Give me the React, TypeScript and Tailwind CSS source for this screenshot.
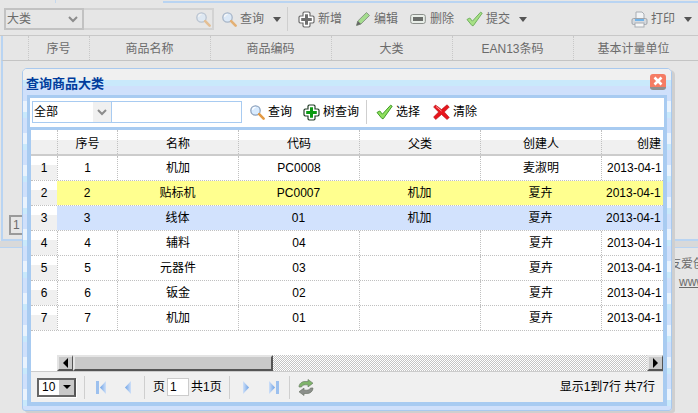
import type { ReactNode } from "react";

function SearchIcon() {
  return (
    <svg width="16" height="16" viewBox="0 0 16 16" className="shrink-0">
      <circle cx="6.5" cy="6.5" r="4.7" fill="#d8ebff" stroke="#8fa3bd" strokeWidth="1.3" />
      <path d="M3.6 6a3 3 0 0 1 3-2.6" fill="none" stroke="#fff" strokeWidth="1.2" />
      <path d="M10.2 10.2 14.6 14.6" stroke="#e39a45" strokeWidth="2.6" strokeLinecap="round" />
    </svg>
  );
}

function PlusIcon({ fill = "#0b9a12", line = "#26402a" }: { fill?: string; line?: string }) {
  return (
    <svg width="17" height="17" viewBox="0 0 17 17" className="shrink-0">
      <path d="M6 1h5l1 1v3h3l1 1v5l-1 1h-3v3l-1 1H6l-1-1v-3H2l-1-1V6l1-1h3V2z" fill="#fff" stroke={line} strokeWidth="1.2" />
      <path d="M7 3.2h3V7h3.8v3H10v3.8H7V10H3.2V7H7z" fill={fill} />
    </svg>
  );
}

function CheckIcon() {
  return (
    <svg width="17" height="16" viewBox="0 0 17 16" className="shrink-0">
      <path d="M1 8.5 3.8 7l2.6 3.2L14.6 1.2l1.6 1-8.8 12.4H6z" fill="#8fe05e" stroke="#3f9a26" strokeWidth="1" />
    </svg>
  );
}

function CrossIcon() {
  return (
    <svg width="17" height="16" viewBox="0 0 17 16" className="shrink-0">
      <path d="M2.5 1 8.5 5.500 14 .8 16.300 3l-5 5 5 5.500-2.300 2-5.500-5-5.800 5L.6 13l5-5-5-5z" fill="#e8141c" stroke="#b01015" strokeWidth=".6" />
      <path d="M3 2.500 8.500 7" stroke="#ff9a9a" strokeWidth="1" />
    </svg>
  );
}

function PencilIcon() {
  return (
    <svg width="16" height="16" viewBox="0 0 16 16" className="shrink-0">
      <path d="M1.500 14.500 2.800 10 11.500 1.500l3 3L6 13z" fill="#a4dc8e" stroke="#8a9a88" strokeWidth="1" />
      <path d="M1.500 14.500 2.800 10 6 13z" fill="#666" />
    </svg>
  );
}

function DeleteIcon() {
  return (
    <svg width="16" height="16" viewBox="0 0 16 16" className="shrink-0">
      <rect x=".7" y="3.500" width="14.600" height="9" rx="2" fill="#e8eee8" stroke="#8b8f8b" />
      <rect x="3" y="6" width="10" height="4" fill="#6a6d6a" />
    </svg>
  );
}

function PrintIcon() {
  return (
    <svg width="17" height="17" viewBox="0 0 17 17" className="shrink-0">
      <path d="M5 1h6l2 2v5H5z" fill="#f2f4f6" stroke="#a9aeb4" />
      <rect x="1" y="7.500" width="15" height="6" rx="1.500" fill="#d5d9de" stroke="#a0a5ab" />
      <rect x="4" y="8" width="9" height="2" fill="#71b4ea" />
      <rect x="4" y="12" width="9" height="4" fill="#f6f6f6" stroke="#a9aeb4" />
    </svg>
  );
}

function CaretDown() {
  return <span className="w-0 h-0 border-x-[4px] border-x-transparent border-t-[5px] border-t-[#555]" />;
}

function ChevronDown({ color = "#8c8c8c" }: { color?: string }) {
  return (
    <svg width="10" height="7" viewBox="0 0 10 7">
      <path d="M1 1 5 5 9 1" fill="none" stroke={color} strokeWidth="2" />
    </svg>
  );
}

function NavIcon({ dir, bar = false }: { dir: "left" | "right"; bar?: boolean }) {
  return (
    <svg width="11" height="15" viewBox="0 0 11 15" className="shrink-0">
      <defs>
        <linearGradient id={`nav-${dir}`} x1="0" x2="1" y1="0" y2="0">
          <stop offset="0" stopColor={dir === "left" ? "#6ea2e6" : "#cfe0f8"} />
          <stop offset="1" stopColor={dir === "left" ? "#cfe0f8" : "#6ea2e6"} />
        </linearGradient>
      </defs>
      {dir === "left" ? (
        <>
          {bar && <rect x="0" y="1" width="3" height="13" fill="#9cc0ee" />}
          <path d="M10 1v13L4 7.500z" fill={`url(#nav-${dir})`} />
        </>
      ) : (
        <>
          {bar && <rect x="8" y="1" width="3" height="13" fill="#9cc0ee" />}
          <path d="M1 1v13l6-6.500z" fill={`url(#nav-${dir})`} />
        </>
      )}
    </svg>
  );
}

function RefreshIcon() {
  return (
    <svg width="18" height="17" viewBox="1.500 0 15 17" className="shrink-0">
      <path d="M2 8c0-3.500 3-5.500 6-5.500h3V.5l5 3.700-5 3.700V5.800H8.500C6.500 5.800 5 6.500 4.500 8z" fill="#7fb56a" stroke="#6d7f68" strokeWidth=".7" />
      <path d="M16 9c0 3.500-3 5.500-6 5.500H7v2l-5-3.700 5-3.700v2.100h2.500c2 0 3.500-.7 4-2.200z" fill="#8b8f8b" stroke="#6d7569" strokeWidth=".7" />
    </svg>
  );
}

function ToolButton({ icon, label, className = "" }: { icon: ReactNode; label: string; className?: string }) {
  return (
    <div className={`flex items-center gap-[3px] shrink-0 ${className}`}>
      {icon}
      <span className="whitespace-nowrap">{label}</span>
    </div>
  );
}

const pageHeaders = [
  { label: "序号", w: "w-[61px]" },
  { label: "商品名称", w: "w-[121px]" },
  { label: "商品编码", w: "w-[121px]" },
  { label: "大类", w: "w-[121px]" },
  { label: "EAN13条码", w: "w-[121px]" },
  { label: "基本计量单位", w: "w-[121px]" },
];

const rows = [
  { id: 1, name: "机加", code: "PC0008", parent: "", user: "麦淑明", bg: "" },
  { id: 2, name: "贴标机", code: "PC0007", parent: "机加", user: "夏卉", bg: "bg-[#ffff8f]" },
  { id: 3, name: "线体", code: "01", parent: "机加", user: "夏卉", bg: "bg-[#d2e2fd]" },
  { id: 4, name: "辅料", code: "04", parent: "", user: "夏卉", bg: "" },
  { id: 5, name: "元器件", code: "03", parent: "", user: "夏卉", bg: "" },
  { id: 6, name: "钣金", code: "02", parent: "", user: "夏卉", bg: "" },
  { id: 7, name: "机加", code: "01", parent: "", user: "夏卉", bg: "" },
];

function PageBehind() {
  return (
    <div className="flex flex-col h-full text-[#6b6b6b]">
      {/* top tab edge */}
      <div className="h-[3px] flex shrink-0">
        <div className="w-[56px] border-r border-[#c4d8ee]" />
        <div className="w-[107px]" />
        <div className="flex-1 border-b-2 border-[#b9d4f2]" />
      </div>

      {/* toolbar */}
      <div className="h-[33px] shrink-0 flex items-center pl-[4px] border-b border-[#c8c8c8]">
        <div className="w-[80px] h-[22px] border-2 border-[#c2c2c2] flex items-center justify-between pl-[1px] pr-[4px]">
          <span>大类</span>
          <ChevronDown />
        </div>
        <div className="w-[130px] h-[22px] border-2 border-l-0 border-[#c2c2c2] flex items-center justify-end pr-[1px] opacity-50">
          <SearchIcon />
        </div>
        <div className="opacity-70 ml-[7px]"><SearchIcon /></div>
        <span className="ml-[3px]">查询</span>
        <div className="ml-[9px] flex"><CaretDown /></div>
        <div className="ml-[6px] w-px h-[24px] bg-[#cfcfcf]" />
        <div className="ml-[10px]"><PlusIcon fill="#6f6f6f" line="#6f6f6f" /></div>
        <span className="ml-[3px]">新增</span>
        <div className="ml-[13px]"><PencilIcon /></div>
        <span className="ml-[3px]">编辑</span>
        <div className="ml-[12px]"><DeleteIcon /></div>
        <span className="ml-[4px]">删除</span>
        <div className="ml-[12px] opacity-70"><CheckIcon /></div>
        <span className="ml-[3px]">提交</span>
        <div className="ml-[9px] flex"><CaretDown /></div>
        <div className="ml-[104px]"><PrintIcon /></div>
        <span className="ml-[3px]">打印</span>
        <div className="ml-[9px] flex"><CaretDown /></div>
      </div>

      {/* behind grid header */}
      <div className="h-[25px] shrink-0 flex border-l-2 border-[#b9d4f2] border-b border-b-[#c4c4c4] ml-[1px] pl-[25px]">
        {pageHeaders.map((h) => (
          <div key={h.label} className={`${h.w} shrink-0 flex items-center justify-center pr-[1px] pt-[1px] border-l border-dotted border-[#c8c8c8] whitespace-nowrap`}>
            {h.label}
          </div>
        ))}
      </div>

      {/* rest of the grid with its pager */}
      <div className="h-[180px] shrink-0 ml-[1px] border-l-2 border-b-2 border-[#b9d4f2] flex items-end pl-[6px] pb-[4px]">
        <div className="w-[13px] h-[20px] border-2 border-[#9a9a9a] border-r-0 flex items-center pl-[2px]">1</div>
      </div>
      <div className="h-[6px] shrink-0 bg-[#d9d9d9]" />
      <div className="h-px shrink-0 bg-[#b9d4f2]" />
      <div className="pl-[669px] pt-[9px] whitespace-nowrap leading-[14px]">友爱创</div>
      <div className="pl-[679px] pt-[5px] whitespace-nowrap leading-[13px] underline">www</div>
    </div>
  );
}

function Dialog() {
  return (
    <div className="absolute left-[22px] top-[68px] w-[650px] h-[343px] rounded-t-[5px] rounded-b-[3px] border border-[#a9c9ee] shadow-[3px_2px_0_#cfcfcf] bg-[repeating-linear-gradient(180deg,#eaf3fd_0,#eaf3fd_11px,#c9e9fb_11px,#c9e9fb_17px,#cfe0fb_17px,#cfe0fb_32px)] text-black overflow-hidden">
      {/* title */}
      <div className="h-[26px] flex items-center justify-between pl-[3px] pr-[5px] bg-[linear-gradient(180deg,#f0f0f0_0,#f0f0f0_11px,#c9e9fb_11px,#c9e9fb_17px,#cfe0fb_17px)]">
        <span className="text-[13px] font-bold text-[#003c9c] pt-[4px]">查询商品大类</span>
        <span className="w-[16px] h-[16px] rounded-[3px] bg-[#f57c63] border-b-[3px] border-[#8f8f8f] flex items-center justify-center">
          <svg width="10" height="10" viewBox="0 0 10 10">
            <path d="M1.500 1.500 8.500 8.500M8.500 1.500 1.500 8.500" stroke="#fff" strokeWidth="2.600" />
          </svg>
        </span>
      </div>

      <div className="px-[4px]">
        {/* toolbar */}
        <div className="h-[35px] border-[3px] border-[#a8cbf1] bg-white flex items-center pl-[2px] pb-[1px]">
          <div className="w-[80px] h-[22px] border border-[#a8cbf1] flex items-center justify-between pl-[1px]">
            <span>全部</span>
            <span className="w-[18px] h-full bg-[#f0f0f0] flex items-center justify-center">
              <ChevronDown />
            </span>
          </div>
          <div className="w-[130px] h-[22px] border border-l-0 border-[#a8cbf1]" />
          <ToolButton className="ml-[7px]" icon={<SearchIcon />} label="查询" />
          <ToolButton className="ml-[11px]" icon={<PlusIcon />} label="树查询" />
          <div className="ml-[7px] w-px h-[24px] bg-[#cfcfcf]" />
          <ToolButton className="ml-[9px]" icon={<CheckIcon />} label="选择" />
          <ToolButton className="ml-[13px]" icon={<CrossIcon />} label="清除" />
        </div>

        <div className="border-x-[4px] border-b-[4px] border-[#a8cbf1] bg-white">
          {/* header row */}
          <div className="h-[26px] flex border-b-2 border-[#cccccc] bg-[linear-gradient(180deg,#fff_0,#fff_10px,#f0f0f0_10px)]">
            <div className="w-[26px] shrink-0" />
            <HeadCell w="w-[60px]">序号</HeadCell>
            <HeadCell w="w-[121px]">名称</HeadCell>
            <HeadCell w="w-[121px]">代码</HeadCell>
            <HeadCell w="w-[121px]">父类</HeadCell>
            <HeadCell w="w-[121px]">创建人</HeadCell>
            <div className="flex-1 border-l border-dotted border-[#c0c0c0] flex items-center pl-[35px] pt-[4px] whitespace-nowrap">创建</div>
          </div>

          {/* rows */}
          {rows.map((r) => (
            <div key={r.id} className="h-[25px] flex border-b border-dotted border-[#c0c0c0]">
              <div className="w-[26px] shrink-0 flex items-center justify-center bg-[linear-gradient(180deg,#fff_0,#fff_9px,#f0f0f0_9px)]">
                {r.id}
              </div>
              <div className={`flex flex-1 min-w-0 ${r.bg}`}>
                <Cell w="w-[60px]" plain={!!r.bg}>{r.id}</Cell>
                <Cell w="w-[121px]" plain={!!r.bg}>{r.name}</Cell>
                <Cell w="w-[121px]" plain={!!r.bg}>{r.code}</Cell>
                <Cell w="w-[121px]" plain={!!r.bg}>{r.parent}</Cell>
                <Cell w="w-[121px]" plain={!!r.bg}>{r.user}</Cell>
                <div className={`flex-1 flex items-center pl-[5px] whitespace-nowrap ${r.bg ? "" : "border-l border-dotted border-[#c0c0c0]"}`}>
                  2013-04-1
                </div>
              </div>
            </div>
          ))}

          {/* horizontal scroll bar */}
          <div className="h-[24px]" />
          <div className="h-[16px] ml-[26px] flex bg-[repeating-conic-gradient(#c4c4c4_0_25%,#ffffff_0_50%)] bg-[length:2px_2px]">
            <ScrollButton dir="left" />
            <div className="w-[200px] bg-[#c9c9c9] border-t-2 border-l-2 border-t-[#e4e4e4] border-l-[#e4e4e4] border-r-2 border-r-[#555] border-b-2 border-b-[#555]" />
            <div className="flex-1" />
            <ScrollButton dir="right" />
          </div>

          {/* pager */}
          <div className="h-[31px] bg-[#f0f0f0] border-t border-[#cccccc] flex items-center pl-[6px] pr-[8px]">
            <div className="w-[39px] h-[19px] border-2 border-[#666] border-r-[#555] flex bg-white shadow-[1px_1px_0_#fff]">
              <span className="w-[20px] pl-[3px] flex items-center">10</span>
              <span className="flex-1 bg-[#c9c9c9] flex items-center justify-center">
                <span className="w-0 h-0 border-x-[4px] border-x-transparent border-t-[4px] border-t-black" />
              </span>
            </div>
            <Sep className="ml-[8px]" />
            <div className="ml-[11px]"><NavIcon dir="left" bar /></div>
            <div className="ml-[14px]"><NavIcon dir="left" /></div>
            <Sep className="ml-[12px]" />
            <span className="ml-[8px]">页</span>
            <div className="ml-[2px] w-[22px] h-[18px] border border-[#cccccc] bg-white flex items-center pl-[2px]">1</div>
            <span className="ml-[2px] whitespace-nowrap">共1页</span>
            <Sep className="ml-[7px]" />
            <div className="ml-[12px]"><NavIcon dir="right" /></div>
            <div className="ml-[15px]"><NavIcon dir="right" bar /></div>
            <Sep className="ml-[10px]" />
            <div className="ml-[7px]"><RefreshIcon /></div>
            <span className="ml-auto whitespace-nowrap">显示1到7行 共7行</span>
          </div>
        </div>
      </div>
    </div>
  );
}

function HeadCell({ w, children }: { w: string; children: ReactNode }) {
  return (
    <div className={`${w} shrink-0 border-l border-dotted border-[#c0c0c0] flex items-center justify-center pt-[4px] whitespace-nowrap`}>
      {children}
    </div>
  );
}

function Cell({ w, plain, children }: { w: string; plain: boolean; children: ReactNode }) {
  return (
    <div className={`${w} shrink-0 flex items-center justify-center whitespace-nowrap ${plain ? "" : "border-l border-dotted border-[#c0c0c0]"}`}>
      {children}
    </div>
  );
}

function ScrollButton({ dir }: { dir: "left" | "right" }) {
  return (
    <div className="w-[16px] h-full bg-[#c9c9c9] border-t-2 border-l-2 border-t-[#e4e4e4] border-l-[#e4e4e4] border-b-2 border-r border-b-[#555] border-r-[#555] flex items-center justify-center">
      {dir === "left" ? (
        <span className="w-0 h-0 border-y-[5px] border-y-transparent border-r-[5px] border-r-black" />
      ) : (
        <span className="w-0 h-0 border-y-[5px] border-y-transparent border-l-[5px] border-l-black" />
      )}
    </div>
  );
}

function Sep({ className }: { className: string }) {
  return <div className={`w-px h-[23px] bg-[#cfcfcf] shrink-0 ${className}`} />;
}

export default function App() {
  return (
    <div className="relative w-[698px] h-[413px] overflow-hidden bg-[#e6e6e6] text-[12px] font-['Liberation_Sans','Noto_Sans_CJK_SC',sans-serif]">
      <PageBehind />
      <Dialog />
    </div>
  );
}
